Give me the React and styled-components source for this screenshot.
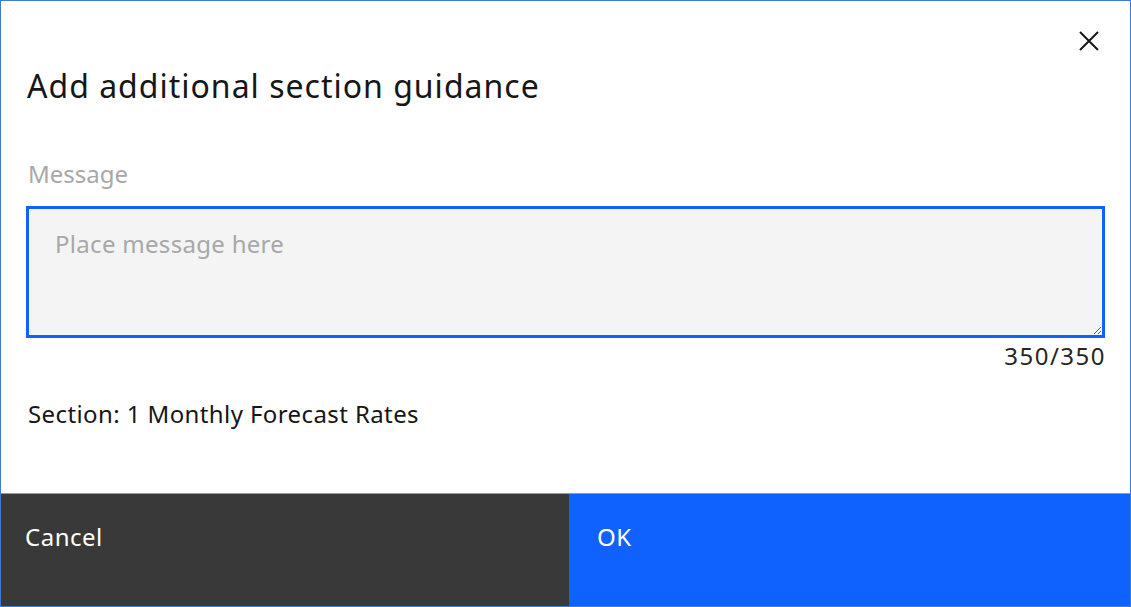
import React from "react";
import styled, { createGlobalStyle } from "styled-components";

const GlobalStyle = createGlobalStyle`
  html, body {
    margin: 0;
    padding: 0;
    background: #ffffff;
  }
  * {
    box-sizing: border-box;
  }
`;

const Frame = styled.div`
  width: 1131px;
  height: 607px;
  border: 1px solid #3f7bd6;
  background: #ffffff;
  display: flex;
  flex-direction: column;
  font-family: "Noto Sans", "Liberation Sans", sans-serif;
  color: #161616;
`;

const Body = styled.div`
  flex: 1;
  display: flex;
  flex-direction: column;
  padding: 0 25px 0 25px;
`;

const Header = styled.div`
  position: relative;
  padding-top: 65px;
`;

const Title = styled.h2`
  margin: 0;
  font-size: 32px;
  font-weight: 400;
  line-height: 40px;
  letter-spacing: 1px;
  padding-left: 1px;
`;

const CloseButton = styled.button`
  position: absolute;
  top: 24px;
  right: 0;
  width: 32px;
  height: 32px;
  border: none;
  background: none;
  padding: 0;
  display: flex;
  align-items: center;
  justify-content: center;
  cursor: pointer;
`;

const Label = styled.label`
  display: block;
  margin-top: 52px;
  padding-left: 2px;
  font-size: 24px;
  line-height: 32px;
  color: #a8a8a8;
`;

const TextArea = styled.textarea`
  display: block;
  margin-top: 16px;
  width: 100%;
  height: 132px;
  resize: vertical;
  border: 3px solid #0f62fe;
  background: #f4f4f4;
  padding: 19px 26px;
  font-family: inherit;
  font-size: 24px;
  line-height: 32px;
  letter-spacing: 0.3px;
  color: #161616;
  caret-color: #161616;
  outline: none;
  &::placeholder {
    color: #a8a8a8;
  }
`;

const Counter = styled.div`
  text-align: right;
  font-size: 24px;
  line-height: 32px;
  letter-spacing: 1.5px;
  color: #262626;
  margin-top: 2px;
  margin-right: -1px;
`;

const SectionText = styled.div`
  font-size: 24px;
  line-height: 32px;
  letter-spacing: 0.4px;
  margin-top: 26px;
  padding-left: 2px;
`;

const Footer = styled.div`
  height: 113px;
  display: flex;
  border-top: 1px solid #9a9a9a;
`;

const FooterButton = styled.button`
  flex: ${(p) => (p.$primary ? "1 1 auto" : "0 0 568px")};
  border: none;
  margin: 0;
  padding: 27px 0 0 ${(p) => (p.$primary ? "28px" : "24px")};
  display: flex;
  align-items: flex-start;
  text-align: left;
  background: ${(p) => (p.$primary ? "#0f62fe" : "#393939")};
  color: #ffffff;
  font-family: inherit;
  font-size: 24px;
  line-height: 32px;
  letter-spacing: 0.5px;
  cursor: pointer;
`;

function App() {
  return (
    <>
      <GlobalStyle />
      <Frame>
        <Body>
          <Header>
            <Title>Add additional section guidance</Title>
            <CloseButton aria-label="Close">
              <svg width="20" height="20" viewBox="0 0 20 20">
                <path
                  d="M1 1 L19 19 M19 1 L1 19"
                  stroke="#161616"
                  strokeWidth="2"
                  fill="none"
                />
              </svg>
            </CloseButton>
          </Header>
          <Label htmlFor="guidance">Message</Label>
          <TextArea id="guidance" placeholder="Place message here" autoFocus />
          <Counter>350/350</Counter>
          <SectionText>Section: 1 Monthly Forecast Rates</SectionText>
        </Body>
        <Footer>
          <FooterButton>Cancel</FooterButton>
          <FooterButton $primary>OK</FooterButton>
        </Footer>
      </Frame>
    </>
  );
}

export default App;
